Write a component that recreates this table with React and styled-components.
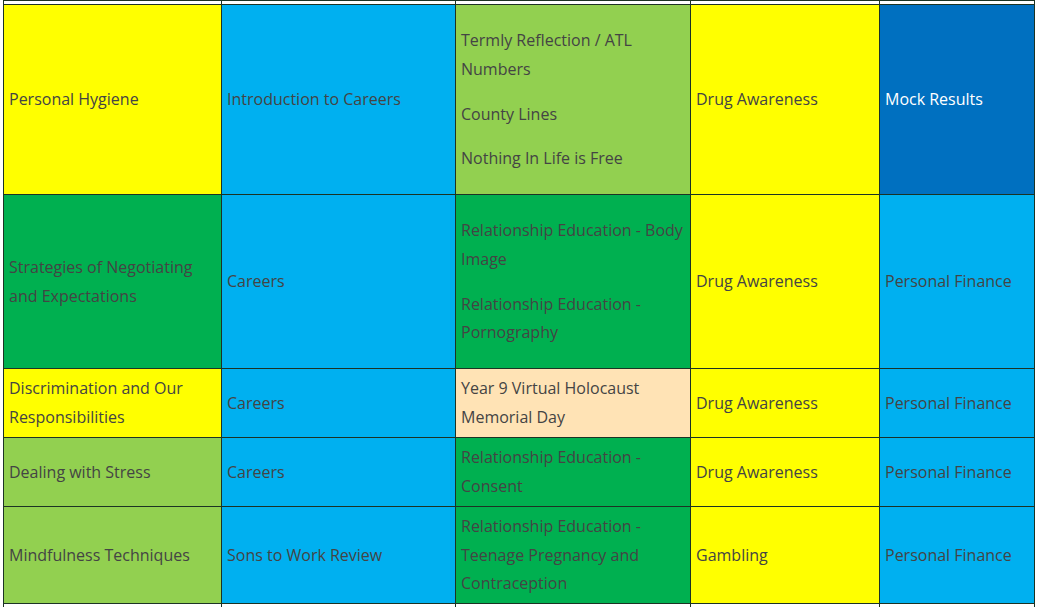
import React from "react";
import styled, { createGlobalStyle } from "styled-components";

const Global = createGlobalStyle`
  html, body { margin: 0; padding: 0; background: #fff; }
  body { font-family: "Open Sans", "Liberation Sans", sans-serif; }
`;

const Viewport = styled.div`
  width: 1038px;
  height: 607px;
  overflow: hidden;
  padding-left: 3px;
  box-sizing: border-box;
`;

const Table = styled.table`
  border-collapse: collapse;
  table-layout: fixed;
  width: 1031px;
  font-family: "Open Sans", "Liberation Sans", sans-serif;
  font-size: 16px;
  line-height: 28.8px;
  color: #444;
`;

const Row = styled.tr`
  height: ${(p) => p.$h}px;
`;

const colors = {
  yellow: "#ffff00",
  blue: "#00b0f0",
  lime: "#92d050",
  green: "#00b050",
  navy: "#0070c0",
  peach: "#ffe3b5",
  white: "#ffffff",
};

const Cell = styled.td`
  border: 1px solid #1c3324;
  padding: ${(p) => (p.$flat ? "0" : "0 5px")};
  vertical-align: middle;
  background: ${(p) => colors[p.$bg] || "#fff"};
  color: ${(p) => (p.$light ? "#ffffff" : "#444444")};
  overflow: hidden;
`;

const Para = styled.p`
  margin: 16px 0;
`;

const widths = [218, 234, 235, 189, 155];

const rows = [
  {
    h: 190,
    cells: [
      { bg: "yellow", t: "Personal Hygiene" },
      { bg: "blue", t: "Introduction to Careers" },
      { bg: "lime", p: ["Termly Reflection / ATL Numbers", "County Lines", "Nothing In Life is Free"] },
      { bg: "yellow", t: "Drug Awareness" },
      { bg: "navy", t: "Mock Results", light: true },
    ],
  },
  {
    h: 174,
    cells: [
      { bg: "green", t: "Strategies of Negotiating and Expectations" },
      { bg: "blue", t: "Careers" },
      { bg: "green", p: ["Relationship Education - Body Image", "Relationship Education - Pornography"] },
      { bg: "yellow", t: "Drug Awareness" },
      { bg: "blue", t: "Personal Finance" },
    ],
  },
  {
    h: 69,
    cells: [
      { bg: "yellow", t: "Discrimination and Our Responsibilities" },
      { bg: "blue", t: "Careers" },
      { bg: "peach", t: "Year 9 Virtual Holocaust Memorial Day" },
      { bg: "yellow", t: "Drug Awareness" },
      { bg: "blue", t: "Personal Finance" },
    ],
  },
  {
    h: 69,
    cells: [
      { bg: "lime", t: "Dealing with Stress" },
      { bg: "blue", t: "Careers" },
      { bg: "green", t: "Relationship Education - Consent" },
      { bg: "yellow", t: "Drug Awareness" },
      { bg: "blue", t: "Personal Finance" },
    ],
  },
  {
    h: 97,
    cells: [
      { bg: "lime", t: "Mindfulness Techniques" },
      { bg: "blue", t: "Sons to Work Review" },
      { bg: "green", t: "Relationship Education - Teenage Pregnancy and Contraception" },
      { bg: "yellow", t: "Gambling" },
      { bg: "blue", t: "Personal Finance" },
    ],
  },
];

export default function App() {
  return (
    <>
      <Global />
      <Viewport>
        <Table>
          <colgroup>
            {widths.map((w, i) => (
              <col key={i} style={{ width: w }} />
            ))}
          </colgroup>
          <tbody>
            <Row $h={4}>
              {widths.map((_, i) => (
                <Cell key={i} $flat $bg="white" />
              ))}
            </Row>
            {rows.map((r, ri) => (
              <Row key={ri} $h={r.h}>
                {r.cells.map((c, ci) => (
                  <Cell key={ci} $bg={c.bg} $light={c.light}>
                    {c.p ? c.p.map((t, k) => <Para key={k}>{t}</Para>) : c.t}
                  </Cell>
                ))}
              </Row>
            ))}
            <Row $h={40}>
              {widths.map((_, i) => (
                <Cell key={i} $flat $bg="white" />
              ))}
            </Row>
          </tbody>
        </Table>
      </Viewport>
    </>
  );
}
